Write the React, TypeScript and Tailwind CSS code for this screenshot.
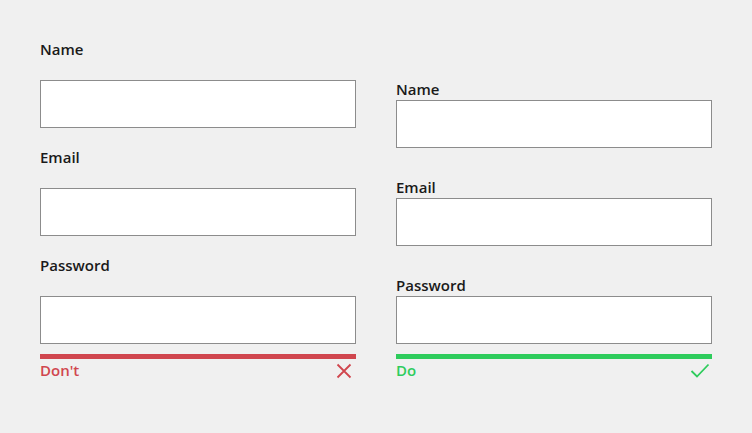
import React from "react";

const inputCls = "block w-full h-[48px] bg-white border border-[#8c8c8c]";
const labelCls = "block h-[20px] leading-[20px] text-[15px] font-semibold text-[#1a1a1a]";

export default function App() {
  return (
    <div className="w-[752px] h-[433px] bg-[#f0f0f0] flex gap-[40px] pl-[40px]" style={{ fontFamily: '"Open Sans", sans-serif' }}>
      <div className="w-[316px] pt-[39px] flex flex-col">
        <label className={labelCls}>Name</label>
        <div className={inputCls + " mt-[21px]"} />
        <label className={labelCls + " mt-[19px]"}>Email</label>
        <div className={inputCls + " mt-[21px]"} />
        <label className={labelCls + " mt-[19px]"}>Password</label>
        <div className={inputCls + " mt-[21px]"} />
        <div className="mt-[10px] h-[5px] bg-[#d0464e]" />
        <div className="flex items-center justify-between h-[22px]">
          <span className="text-[15px] font-semibold text-[#d0464e] leading-[22px]">Don't</span>
          <svg width="16" height="16" viewBox="0 0 16 16" className="mr-[4px] mt-[2px]">
            <path d="M1.5 1.5 L14.5 14.5 M14.5 1.5 L1.5 14.5" stroke="#d0464e" strokeWidth="1.8" fill="none" />
          </svg>
        </div>
      </div>
      <div className="w-[316px] pt-[79px] flex flex-col">
        <label className={labelCls}>Name</label>
        <div className={inputCls + " mt-[1px]"} />
        <label className={labelCls + " mt-[29px]"}>Email</label>
        <div className={inputCls + " mt-[1px]"} />
        <label className={labelCls + " mt-[29px]"}>Password</label>
        <div className={inputCls + " mt-[1px]"} />
        <div className="mt-[10px] h-[5px] bg-[#2ecc5c]" />
        <div className="flex items-center justify-between h-[22px]">
          <span className="text-[15px] font-semibold text-[#2ecc5c] leading-[22px]">Do</span>
          <svg width="20" height="16" viewBox="0 0 20 16" className="mr-[2px] mt-[2px]">
            <path d="M1.5 8 L7 13.5 L18.5 1.5" stroke="#2ecc5c" strokeWidth="1.8" fill="none" />
          </svg>
        </div>
      </div>
    </div>
  );
}
